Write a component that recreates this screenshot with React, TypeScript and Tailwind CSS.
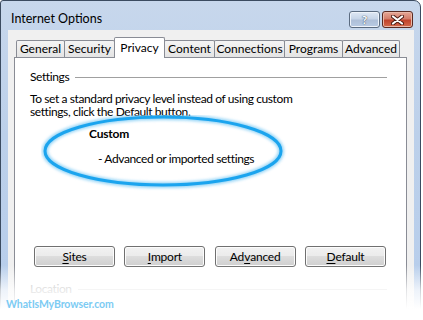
import React from "react";

const tabs = [
  { label: "General", w: 49 },
  { label: "Security", w: 51 },
  { label: "Privacy", w: 51, sel: true },
  { label: "Content", w: 51 },
  { label: "Connections", w: 71 },
  { label: "Programs", w: 59 },
  { label: "Advanced", w: 58 },
];

function Btn({ children }: { children: React.ReactNode }) {
  return (
    <div className="w-[81px] h-[21px] rounded-[3px] border border-[#707070] bg-[linear-gradient(#f2f2f2_0%,#ebebeb_50%,#dddddd_50%,#cfcfcf_100%)] shadow-[inset_0_0_0_1px_#fcfcfc] flex items-center justify-center text-[12px] tracking-[-0.2px] text-black leading-none">
      {children}
    </div>
  );
}

export default function App() {
  return (
    <div className="relative w-[423px] h-[320px] overflow-hidden bg-white font-['Lato',sans-serif] text-black">
      <div className="w-[421px] h-[340px] border border-[#3b4b60] rounded-tr-[7px] rounded-tl-[3px] bg-[linear-gradient(180deg,#c7d7ec_0%,#bcd0ea_40%,#b6cdec_100%)] flex flex-col">
        {/* title bar */}
        <div className="h-[29px] flex items-start shrink-0">
          <div className="pl-[10px] pt-[10px] text-[12.5px] leading-[16px] text-black">Internet Options</div>
          <div className="ml-auto flex pt-[10px] pr-[7px] gap-[2px]">
            <div className="w-[31px] h-[17px] rounded-[3px] border border-[#5b6b80] bg-[linear-gradient(#dfe8f4_0%,#c7d5e8_45%,#aebfd8_55%,#b9cbe4_100%)] shadow-[inset_0_0_0_1px_#eef3fa] flex items-center justify-center">
              <span className="text-[12px] leading-none font-bold text-white [text-shadow:0_0_1px_#3a4a60,0_0_1px_#3a4a60]">?</span>
            </div>
            <div className="w-[31px] h-[17px] rounded-[3px] border border-[#5a2a22] bg-[linear-gradient(#e6a797_0%,#d47e6b_45%,#c0432c_55%,#d46a4d_100%)] shadow-[inset_0_0_0_1px_#eab8a8] flex items-center justify-center">
              <svg width="13" height="10" viewBox="0 0 13 10">
                <path d="M2 1.5 L11 8.5 M11 1.5 L2 8.5" stroke="#4a1a12" strokeWidth="4" strokeLinecap="round" />
                <path d="M2 1.5 L11 8.5 M11 1.5 L2 8.5" stroke="#ffffff" strokeWidth="2.2" strokeLinecap="round" />
              </svg>
            </div>
          </div>
        </div>
        {/* client */}
        <div className="flex-1 ml-[7px] mr-[6px] bg-[#f0f0f0] pt-[7px] pl-[6px] pr-[7px] flex flex-col">
          {/* tabs */}
          <div className="h-[20px] flex items-end pl-[2px] relative z-10">
            {tabs.map((t, i) => (
              <div
                key={t.label}
                style={{ width: t.w }}
                className={
                  (i > 0 ? "-ml-px " : "") +
                  (t.sel
                    ? "relative z-10 h-[21px] -mb-px bg-white border border-b-0 border-[#898c95] rounded-t-[2px] flex items-start justify-center pt-[3px] text-[12px] leading-[14px] text-black"
                    : "h-[17px] bg-[linear-gradient(#f4f4f4,#e4e4e4)] border border-b-0 border-[#898c95] rounded-t-[2px] flex items-start justify-center pt-[1px] text-[12px] leading-[14px] text-black")
                }
              >
                {t.label}
              </div>
            ))}
          </div>
          {/* panel */}
          <div className="relative flex-1 bg-white border border-[#898c95] pl-[15px] pr-[19px] pt-[11px] tracking-[-0.4px]">
            <div className="flex items-center gap-[6px] h-[15px]">
              <span className="text-[12px] leading-[15px]">Settings</span>
              <div className="flex-1 h-px bg-[#a0a0a0] mt-[1px]" />
            </div>
            <div className="mt-[8px] text-[12px] leading-[13px]">
              <div>To set a standard privacy level instead of using custom</div>
              <div>settings, click the Default button.</div>
            </div>
            <div className="mt-[8px] pl-[59px] text-[12px] leading-[15px] font-bold tracking-[-0.2px]">Custom</div>
            <div className="mt-[10px] pl-[68px] text-[12px] leading-[15px]">- Advanced or imported settings</div>
            <div className="mt-[80px] pl-[4px] pr-[1px] flex justify-between">
              <Btn><span className="underline underline-offset-2">S</span>ites</Btn>
              <Btn><span className="underline underline-offset-2">I</span>mport</Btn>
              <Btn>Ad<span className="underline underline-offset-2">v</span>anced</Btn>
              <Btn><span className="underline underline-offset-2">D</span>efault</Btn>
            </div>
            <div className="mt-[14px] flex items-center gap-[6px] h-[15px]">
              <span className="text-[12px] leading-[15px] text-[#a0a0a0]">Location</span>
              <div className="flex-1 h-px bg-[#d8d8d8] mt-[1px]" />
            </div>
            {/* annotation ellipse */}
            <svg className="absolute left-[26px] top-[57px]" width="250" height="80" viewBox="0 0 250 80">
              <defs>
                <filter id="glow" x="-10%" y="-20%" width="120%" height="140%">
                  <feGaussianBlur stdDeviation="1.6" />
                </filter>
              </defs>
              <ellipse cx="122" cy="36" rx="118" ry="34" fill="none" stroke="#7ccaf4" strokeWidth="6" filter="url(#glow)" opacity="0.8" />
              <ellipse cx="122" cy="36" rx="118" ry="34" fill="none" stroke="#1ba4ee" strokeWidth="3" />
            </svg>
          </div>
        </div>
      </div>
      {/* bottom fade */}
      <div className="absolute left-0 right-0 bottom-0 h-[55px] bg-[linear-gradient(180deg,rgba(255,255,255,0)_0%,rgba(255,255,255,0.75)_45%,#ffffff_80%)]" />
      <div className="absolute left-[6px] top-[299px] text-[10.5px] leading-[11px] font-bold tracking-[-0.1px] text-[#7ccbf3] font-['Lato',sans-serif]">
        WhatIsMyBrowser.com
      </div>
    </div>
  );
}
